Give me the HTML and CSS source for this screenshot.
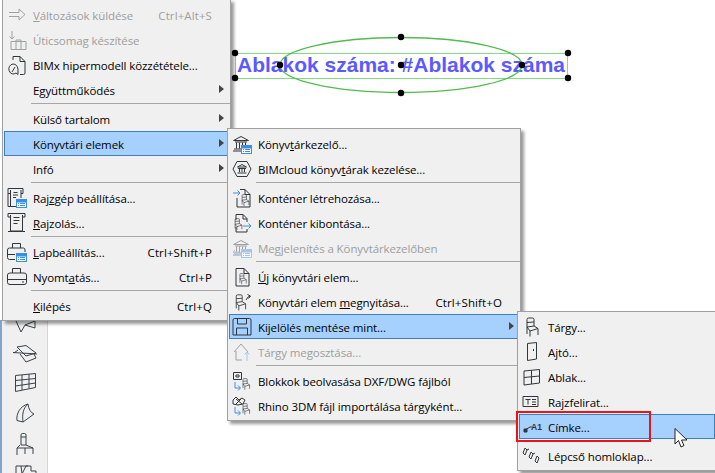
FILE: index.html
```html
<!DOCTYPE html>
<html lang="hu">
<head>
<meta charset="utf-8">
<title>Könyvtári elemek</title>
<link rel="stylesheet" href="styles.css">
</head>
<body>
<svg class="defs" width="0" height="0" aria-hidden="true">
  <defs>
    <g id="win"><rect x="9.500" y="11.500" width="10" height="8" fill="#fff" stroke="#3b8ee8"/><rect x="9.500" y="11.500" width="10" height="2.500" fill="#3b8ee8" stroke="#3b8ee8"/><path d="M11 15.500h1M13 15.500h5M11 17.500h1M13 17.500h5" stroke="#3b8ee8" fill="none"/></g>
    <g id="chair"><path d="M5 10V2.500Q5 1 6.500 1h4Q12 1 12 2.500V9M5 10l7-1 4 2.500-8 2.500zM5 5.500l7-.5M5 10v7M8 14v5.500M16 11.500V18" fill="none"/></g>
    <g id="bank"><path d="M1.500 6.500 9 2.500l7.500 4zM3 8h12M4.500 8.500v6M7.500 8.500v6M10.500 8.500v6M13.500 8.500v4M2 15h8M1 17h8" fill="none"/></g>
  </defs>
</svg>

<main class="desktop">
  <aside class="toolbox">
    <svg class="tool" viewBox="0 0 24 14"><path d="M3 1 8 12 12 5 22 8 22 1 12 5" /></svg>
    <svg class="tool" viewBox="0 0 24 18"><path d="M0 7.500 24 9M4 2 13 0.500 23 8 13 11zM5 5 1 8M7 9 13 17 23 13 21 9" /></svg>
    <svg class="tool" viewBox="0 0 24 20"><path d="M2.500 2.500 22.500 0.500V14.500L2.500 18.500zM2.500 7.500 22.500 5.500M2.500 13 22.500 10M9 2v15M16 1v14.500" /></svg>
    <svg class="tool" viewBox="0 0 24 20"><path d="M4 17.500C3 11 7 3 15 1q1 8 6 10l-11 8zM15 1C10 5 9 12 10 19" /></svg>
    <svg class="tool" viewBox="0 0 24 22"><path d="M8 12V2q0-1.500 1.500-1.500h2Q13 .5 13 2v10M7 12 4 15v7M8 12h5l7 3v6M4 15h16M12 15v6M8 4h5" /></svg>
    <svg class="tool" viewBox="0 0 24 12"><path d="M3 11V1h5l1 8 4-8h5v5h5v6M8 1h7" /></svg>
  </aside>

  <div class="label-text">Ablakok száma: #Ablakok száma</div>
  <svg class="selection" width="715" height="473" viewBox="0 0 715 473">
    <rect class="tbox" x="235.500" y="53.500" width="332" height="25"/>
    <ellipse class="oval" cx="401" cy="65" rx="121" ry="27.500"/>
    <g class="handles">
      <circle cx="235" cy="53" r="3.200"/><circle cx="568" cy="53" r="3.200"/>
      <circle cx="235" cy="78" r="3.200"/><circle cx="568" cy="78" r="3.200"/>
      <circle cx="401" cy="37" r="3.200"/><circle cx="401" cy="93" r="3.200"/>
      <circle cx="280" cy="65" r="3.200"/><circle cx="401" cy="65" r="3.200"/><circle cx="522" cy="65" r="3.200"/>
    </g>
  </svg>

  <nav class="menu menu-main">
    <div class="row off"><svg class="ico" viewBox="0 0 20 20"><path d="M2 7.500h10V4l6 5.500-6 5.500v-3.500H2" /></svg><span class="lbl"><u>V</u>áltozások küldése</span><span class="key">Ctrl+Alt+S</span></div>
    <div class="row off"><svg class="ico" viewBox="0 0 20 20"><path d="M5 1v8M2.500 6.500 5 9l2.500-2.500M4 11.500h15v8H4zM9 11.500V10h5v1.500M9 12v7M14 12v7" /></svg><span class="lbl">Úticsomag készítése</span></div>
    <div class="row"><svg class="ico" viewBox="0 0 20 20"><path d="M6 5V1.500h7l5 5V18q0 1.500-1.500 1.500H13M13 1.500V6.500h5M6 9a4.500 5 0 1 0 3 9l2 1.500V14Q10 9 6 9zM5 17l3-5" /></svg><span class="lbl">BIMx hipermodell közzététele...</span></div>
    <div class="row"><span class="blank"></span><span class="lbl">Együttműködés</span><span class="arrow"></span></div>
    <div class="sep"></div>
    <div class="row"><span class="blank"></span><span class="lbl">Külső tartalom</span><span class="arrow"></span></div>
    <div class="row on"><span class="blank"></span><span class="lbl">Könyvtári elemek</span><span class="arrow"></span></div>
    <div class="row"><span class="blank"></span><span class="lbl">Infó</span><span class="arrow"></span></div>
    <div class="sep"></div>
    <div class="row"><svg class="ico" viewBox="0 0 20 20"><path d="M3.500 5.500H1V.5h15v5h-2M3.500 2v16M14 2v8M6.500 4.500h4M6 7h5M6 9.500h3M1 18.500h8M1 5.500v13" /><use href="#win"/></svg><span class="lbl">Raj<u>z</u>gép beállítása...</span></div>
    <div class="row"><svg class="ico" viewBox="0 0 20 20"><path d="M3.500 4H1V.5h17V4h-2.500M3.500 2v16h12V2M6.500 4.500h6M6.500 7.500h6M6.500 10.500h4M1 18.500h17" /></svg><span class="lbl"><u>R</u>ajzolás...</span></div>
    <div class="sep"></div>
    <div class="row"><svg class="ico" viewBox="0 0 20 20"><path d="M5.500 6V1.500h8V6M8 17.500H2.500q-2 0-2-2V8q0-2 2-2h14q1.500 0 1.500 2v2M.5 12.500H8" /><use href="#win"/></svg><span class="lbl"><u>L</u>apbeállítás...</span><span class="key">Ctrl+Shift+P</span></div>
    <div class="row"><svg class="ico" viewBox="0 0 20 20"><path d="M5.500 6V1.500h8V6M3 17.500q-2.500 0-2.500-2V8Q.5 6 3 6h14q2.500 0 2.500 2v7.500q0 2-2.500 2zM.5 12.500h19M15 15h2" /></svg><span class="lbl">Nyomt<u>a</u>tás...</span><span class="key">Ctrl+P</span></div>
    <div class="sep"></div>
    <div class="row"><span class="blank"></span><span class="lbl"><u>K</u>ilépés</span><span class="key">Ctrl+Q</span></div>
  </nav>

  <nav class="menu menu-lib">
    <div class="row"><svg class="ico" viewBox="0 0 20 20"><use href="#bank"/><use href="#win"/></svg><span class="lbl">Könyv<u>t</u>árkezelő...</span></div>
    <div class="row"><svg class="ico" viewBox="0 0 20 20"><path d="M5 2.500h10L19 10l-4 7.500H5L1 10zM5.500 8 10 5.500 14.500 8zM6 9.500h8M7.500 10v3M10 10v3M12.500 10v3M5.500 14h9" /></svg><span class="lbl">BIMcloud könyv<u>t</u>árak kezelése...</span></div>
    <div class="sep"></div>
    <div class="row"><svg class="ico" viewBox="0 0 20 20"><path class="blue" d="M1 5h7M5.500 2.500 8 5 5.500 7.500" /><path d="M8 1.500h5l5 5V19H5V10M13 1.500v5h5" /><use href="#chair" transform="translate(7 6) scale(.62)"/></svg><span class="lbl">Konténer létrehozása...</span></div>
    <div class="row"><svg class="ico" viewBox="0 0 20 20"><path d="M4 7V1.500h7l4 4V9M11 1.500V6h4M4 14v5h11v-3" /><use href="#chair" transform="translate(0 5) scale(.62)"/><path class="blue" d="M11 13h8M16.500 10.500 19 13l-2.500 2.500" /></svg><span class="lbl">Konténer kibontása...</span></div>
    <div class="row off"><svg class="ico" viewBox="0 0 20 20"><use href="#bank"/><path d="M1 14h6M3 12l-2 2 2 2M7 17H1" class="blue"/><use href="#win"/></svg><span class="lbl">Megjelenítés a Könyvtárkezelőben</span></div>
    <div class="sep"></div>
    <div class="row"><svg class="ico" viewBox="0 0 20 20"><path d="M4 19V1.500h8l5 5V19zM12 1.500v5h5" /><use href="#chair" transform="translate(5 6) scale(.58)"/></svg><span class="lbl"><u>Ú</u>j könyvtári elem...</span></div>
    <div class="row"><svg class="ico" viewBox="0 0 20 20"><use href="#chair" transform="translate(0 2) scale(.85)"/><path d="M14 8q2-4 4-4M15.500 2.500 18.500 4 16.500 6.500" /></svg><span class="lbl">Könyvtári elem <u>m</u>egnyitása...</span><span class="key">Ctrl+Shift+O</span></div>
    <div class="row on"><svg class="ico" viewBox="0 0 20 20"><path d="M1 3q0-1.500 1.500-1.500h15q1.500 0 1.500 1.500v15H1zM5.500 2v5h9V2M4.500 18v-7h11v7" /></svg><span class="lbl">Kijelölés mentése mint...</span><span class="arrow"></span></div>
    <div class="row off"><svg class="ico" viewBox="0 0 20 20"><path d="M2 10 9 2l7 8M4 9v9h6" /><path class="blue" d="M15 19v-9M12.500 12.500 15 10l2.500 2.500"/></svg><span class="lbl">Tárgy megosztása...</span></div>
    <div class="sep"></div>
    <div class="row"><svg class="ico" viewBox="0 0 20 20"><path d="M1.500 1.500h8v7h-8zM4 4h3v2H4z" /><use href="#chair" transform="translate(8 7) scale(.6)"/><path class="blue" d="M3 11v6h5M6 14.500 8.500 17 6 19.500"/></svg><span class="lbl">Blokkok beolvasása DXF/DWG fájlból</span></div>
    <div class="row"><svg class="ico" viewBox="0 0 20 20"><path d="M1 4l3-3 3 3 3-2 3 2-2 4-5 1-5-1zM4 3l6 5M9 3 4 8" /><use href="#chair" transform="translate(8 7) scale(.6)"/><path class="blue" d="M3 11v6h5M6 14.500 8.500 17 6 19.500"/></svg><span class="lbl">Rhino 3DM fájl importálása tárgyként...</span></div>
  </nav>

  <nav class="menu menu-save">
    <div class="row"><svg class="ico" viewBox="0 0 20 20"><use href="#chair"/></svg><span class="lbl">Tárgy...</span></div>
    <div class="row"><svg class="ico" viewBox="0 0 20 20"><path d="M5.500 1.500 14.500 .5V17L5.500 18.500zM11.500 7v2" /></svg><span class="lbl">Ajtó...</span></div>
    <div class="row"><svg class="ico" viewBox="0 0 20 20"><path d="M2 4 17.500 2.500V16L2 18zM2 10.500 17.500 9M9.500 3.500V17" /></svg><span class="lbl">Ablak...</span></div>
    <div class="row"><svg class="ico" viewBox="0 0 20 20"><path d="M1 4.500h15v10H1zM3.500 7.500h5M6 7.500v5M10 7.500h4M10 10h4M10 12.500h4" /></svg><span class="lbl">Rajzfelirat...</span></div>
    <div class="row on"><svg class="ico tag" viewBox="0 0 20 20"><path class="solid" d="M2 12h3v3H2z"/><path d="M3 13 8 10h2" /></svg><span class="tagtext">A1</span><span class="lbl">Címke...</span></div>
    <div class="sep hidden"></div>
    <div class="row"><svg class="ico" viewBox="0 0 20 20"><path d="M3 2 1 7l2 2 2-5zM9 6 7 11l2 2 2-5zM15 10l-2 5 2 2 2-5zM5 4l2-1M11 8l2-1" /></svg><span class="lbl">Lépcső homloklap...</span></div>
  </nav>

  <div class="redbox"></div>
  <svg class="cursor" width="14" height="21" viewBox="0 0 14 21"><path d="M1 .5V16l3.500-3.500L7 19l3-1.500-2.500-5.500H13z"/></svg>
</main>
</body>
</html>
```
FILE: styles.css
```css
* { box-sizing: border-box; }
html, body { margin: 0; padding: 0; }
body { width: 715px; height: 473px; overflow: hidden; background: #fff; }
.defs { position: absolute; }
.desktop { position: relative; width: 715px; height: 473px; overflow: hidden; background: #fff; }

.toolbox {
  position: absolute; left: 0; top: 320px; bottom: 0; width: 48px;
  display: flex; flex-direction: column; align-items: center; gap: 10px;
  background: #f0f0f0; border-left: 2px solid #7fa6c9; border-right: 1px solid #d6d6d6;
}
.tool { fill: none; stroke: #3b4148; stroke-width: 1; width: 24px; flex: none; }
.toolbox .tool:nth-child(1) { height: 14px; }
.toolbox .tool:nth-child(2) { height: 18px; margin-top: 1px; }
.toolbox .tool:nth-child(3) { height: 20px; }
.toolbox .tool:nth-child(4) { height: 20px; }
.toolbox .tool:nth-child(5) { height: 22px; }
.toolbox .tool:nth-child(6) { height: 12px; }

.selection { position: absolute; left: 0; top: 0; }
.tbox { fill: none; stroke: #7fdc7f; }
.oval { fill: none; stroke: #52bb52; stroke-width: 1.3; }
.handles circle { fill: #000; }
.label-text {
  position: absolute; left: 237px; top: 52px;
  font: bold 21px/26px "Liberation Sans", Arial, sans-serif;
  color: #5a5aff; white-space: nowrap;
}

.menu {
  position: absolute;
  background: #f0f0f0;
  border: 1px solid #a0a0a0;
  padding: 2px 1px;
  box-shadow: 3px 3px 3px rgba(0, 0, 0, .4);
  font: 11.5px/23px "Open Sans", "Noto Sans", sans-serif;
  color: #000;
}
.menu-main { left: 2px; top: -1px; width: 229px; }
.menu-lib { left: 227px; top: 128px; width: 294px; }
.menu-save { left: 517px; top: 311px; width: 200px; }

.row {
  position: relative;
  display: flex; align-items: center;
  height: 25px;
  border: 1px solid transparent;
  padding-left: 2px;
  white-space: nowrap;
}
.row.on { background: #a6d0fd; border-color: #3c80bd; }
.row.off { color: #9e9e9e; }
.row.off .ico { opacity: .42; }
.ico, .blank { flex: none; width: 20px; height: 20px; margin-right: 6px; }
.ico { fill: none; stroke: #30363c; stroke-width: 1; }
.ico .blue { stroke: #3b8ee8; }
.ico .solid { fill: #30363c; }
.lbl { flex: 1 1 auto; padding-top: 2px; letter-spacing: -.1px; }
.key { flex: none; padding-top: 2px; margin-right: 16px; letter-spacing: .1px; }
.arrow {
  position: absolute; right: 4px; top: 7px;
  width: 0; height: 0;
  border-left: 5px solid #444;
  border-top: 4px solid transparent; border-bottom: 4px solid transparent;
}
.sep { height: 4px; padding-top: 1px; margin: 0 -1px 0 27px; }
.sep::before { content: ""; display: block; height: 1px; background: #a6a6a6; }
.sep.hidden::before { background: transparent; }
.tagtext {
  position: absolute; left: 11px; top: 2px;
  font: bold 8.5px/20px "Liberation Sans", sans-serif; color: #30363c;
}

.redbox {
  position: absolute; left: 516px; top: 411px; width: 135px; height: 31px;
  border: 2px solid #e8141c;
}
.cursor { position: absolute; left: 674px; top: 428px; fill: #fff; stroke: #222; stroke-width: 1; }
```
